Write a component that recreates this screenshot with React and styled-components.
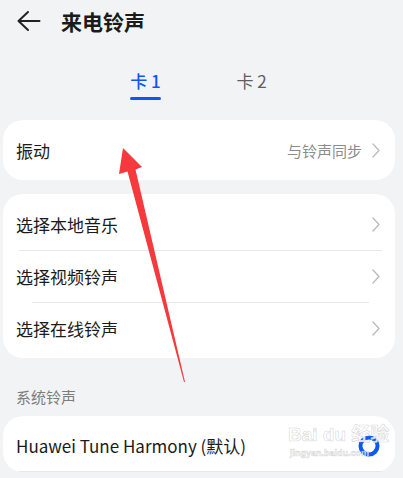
import React from 'react';
import styled, { createGlobalStyle } from 'styled-components';

const GlobalStyle = createGlobalStyle`
  html, body {
    margin: 0;
    padding: 0;
    background: #f1f3f5;
  }
  body {
    font-family: "Noto Sans CJK SC", "Noto Sans", sans-serif;
    color: #1b1b1b;
  }
`;

const Page = styled.div`
  position: relative;
  width: 403px;
  height: 478px;
  overflow: hidden;
  background: #f1f3f5;
`;

const Header = styled.div`
  display: flex;
  align-items: center;
  height: 42px;
  padding-left: 17px;
`;

const Title = styled.div`
  margin-left: 20px;
  font-size: 21px;
  font-weight: 700;
  line-height: 42px;
  color: #1b1b1b;
`;

const Tabs = styled.div`
  display: flex;
  justify-content: center;
  gap: 75px;
  padding-top: 28px;
  padding-right: 6px;
`;

const Tab = styled.div`
  display: flex;
  flex-direction: column;
  align-items: center;
  font-size: 17px;
  line-height: 22px;
  color: ${({ active }) => (active ? '#0a59f7' : '#5f5f5f')};
  font-weight: ${({ active }) => (active ? 500 : 400)};
`;

const Underline = styled.div`
  width: 31px;
  height: 3px;
  margin-top: 5px;
  border-radius: 2px;
  background: ${({ active }) => (active ? '#0a59f7' : 'transparent')};
`;

const Card = styled.div`
  margin: ${({ top }) => top}px 8px 0 3px;
  padding: ${({ pad }) => pad || 0}px 0;
  background: #fff;
  border-radius: 20px;
`;

const Row = styled.div`
  display: flex;
  align-items: center;
  height: ${({ h }) => h || 52}px;
  padding: ${({ pt }) => pt || 0}px 15px 0 13px;
  box-sizing: border-box;
`;

const Label = styled.div`
  flex: 1;
  font-size: ${({ size }) => size || 17}px;
  color: #1b1b1b;
  white-space: nowrap;
`;

const Value = styled.div`
  font-size: 15px;
  color: #8c8c8c;
  margin-right: 10px;
`;

const Divider = styled.div`
  height: 1px;
  background: #e8e8e8;
  margin: 0 ${({ right }) => right}px 0 ${({ left }) => left}px;
`;

const Section = styled.div`
  padding: 28px 0 0 16px;
  font-size: 15px;
  line-height: 22px;
  color: #7d7d7d;
`;

const Overlay = styled.svg`
  position: absolute;
  left: 0;
  top: 0;
  pointer-events: none;
`;

const Watermark = styled.div`
  position: absolute;
  left: 288px;
  top: 424px;
  display: flex;
  flex-direction: column;
  align-items: flex-start;
  white-space: nowrap;
  color: rgba(255, 255, 255, 0.85);
  -webkit-text-stroke: 0.6px rgba(150, 150, 150, 0.4);
  font-family: "Liberation Sans", "Noto Sans CJK SC", sans-serif;
  pointer-events: none;
`;

const MarkTop = styled.div`
  font-size: 19px;
  font-weight: 700;
  line-height: 22px;
`;

const MarkBottom = styled.div`
  font-size: 9px;
  line-height: 12px;
  margin: 1px 0 0 2px;
  font-weight: 700;
`;

const Chevron = () => (
  <svg width="8" height="15" viewBox="0 0 8 15">
    <path d="M1 1 L7 7.5 L1 14" fill="none" stroke="#bdbdbd" strokeWidth="1.4" strokeLinecap="round" strokeLinejoin="round" />
  </svg>
);

const BackArrow = () => (
  <svg width="24" height="22" viewBox="0 0 24 22">
    <path d="M1.5 11 H22.5 M11 2 L1.5 11 L11 20" fill="none" stroke="#222" strokeWidth="2" strokeLinecap="round" strokeLinejoin="round" />
  </svg>
);

const Radio = () => (
  <svg width="22" height="22" viewBox="0 0 22 22">
    <circle cx="11" cy="11" r="8.5" fill="#fff" stroke="#0a59f7" strokeWidth="4" />
  </svg>
);

const rows = ['选择本地音乐', '选择视频铃声', '选择在线铃声'];

export default function App() {
  return (
    <Page>
      <GlobalStyle />
      <Header>
        <BackArrow />
        <Title>来电铃声</Title>
      </Header>

      <Tabs>
        <Tab active>
          卡 1
          <Underline active />
        </Tab>
        <Tab>
          卡 2
          <Underline />
        </Tab>
      </Tabs>

      <Card top={20}>
        <Row h={60}>
          <Label>振动</Label>
          <Value>与铃声同步</Value>
          <Chevron />
        </Row>
      </Card>

      <Card top={14} pad={4}>
        {rows.map((r, i) => (
          <React.Fragment key={r}>
            {i === 1 && <Divider left={16} right={13} />}
            {i === 2 && <Divider left={29} right={26} />}
            <Row h={i === 0 ? 52 : 51}>
              <Label>{r}</Label>
              <Chevron />
            </Row>
          </React.Fragment>
        ))}
      </Card>

      <Section>系统铃声</Section>

      <Card top={8}>
        <Row h={55} pt={4}>
          <Label>Huawei Tune Harmony (默认)</Label>
          <Radio />
        </Row>
        <Divider left={16} right={13} />
      </Card>

      <Watermark>
        <MarkTop>Bai du 经验</MarkTop>
        <MarkBottom>jingyan.baidu.com</MarkBottom>
      </Watermark>

      <Overlay width="403" height="478" viewBox="0 0 403 478">
        <polygon
          points="123,148 142,167 135.5,169.5 185,382 184,382 127.5,171.5 119,174"
          fill="#f5393c"
        />
      </Overlay>
    </Page>
  );
}
